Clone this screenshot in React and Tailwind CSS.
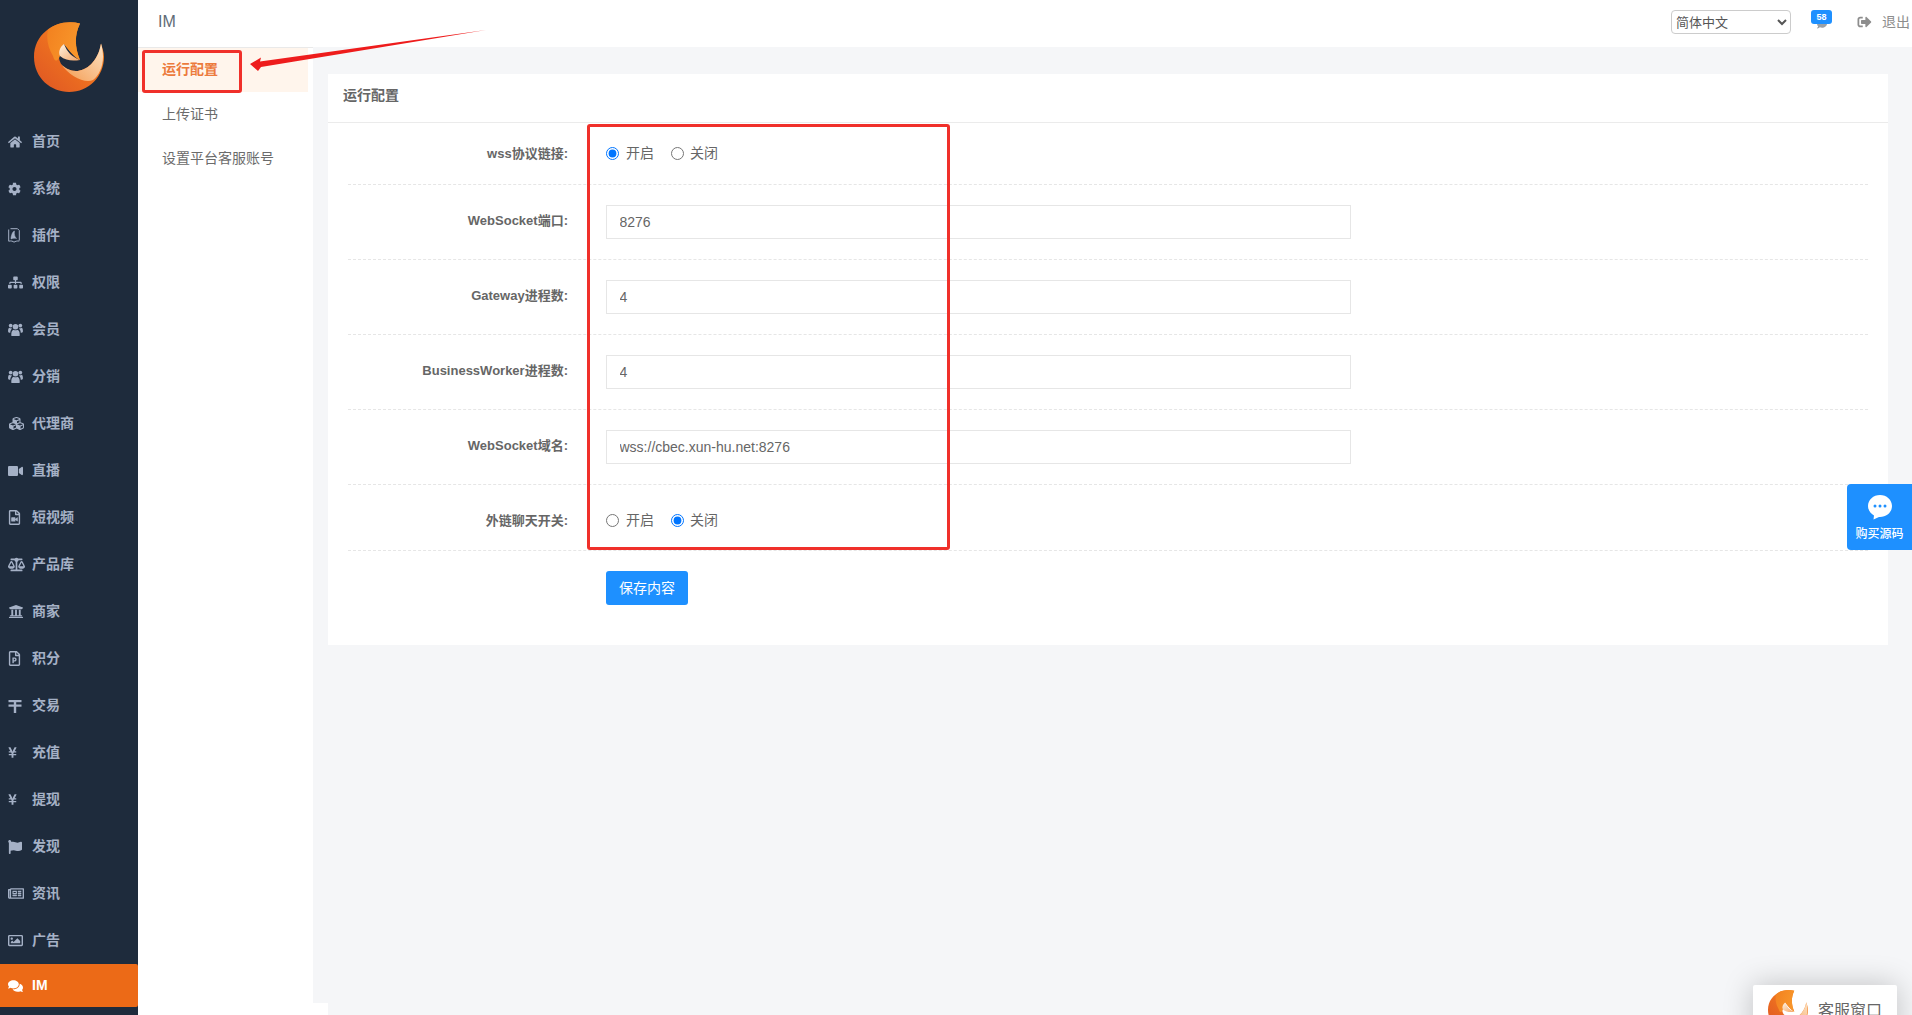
import React from "react";
import {
  FaHome, FaCog, FaSitemap, FaCubes, FaVideo, FaRegFileVideo,
  FaBalanceScale, FaUniversity, FaRegFilePowerpoint, FaYenSign, FaFlag, FaRegNewspaper,
  FaRegImage, FaComments, FaSignOutAlt, FaComment,
} from "react-icons/fa";

function TradeIcon({ className }) {
  return (
    <svg viewBox="0 0 14 14" className={className} fill="currentColor">
      <rect x="0.5" y="1" width="13" height="2.2" />
      <rect x="0.5" y="5.5" width="13" height="2.2" />
      <rect x="5.8" y="1" width="2.4" height="13" />
    </svg>
  );
}

function UsersIcon({ className }) {
  return (
    <svg viewBox="0 0 16 14" className={className} fill="currentColor">
      <circle cx="8" cy="4" r="3" />
      <path d="M3.6,14C3,9.5 4.5,7.6 6,7.2C7,8 9,8 10,7.2C11.5,7.6 13,9.5 12.4,14C11,14.3 5,14.3 3.6,14Z" />
      <circle cx="2.8" cy="2.8" r="2" />
      <circle cx="13.2" cy="2.8" r="2" />
      <path d="M0,9C0,6.5 .6,5.2 1.4,5.2C2.2,5.8 3.2,5.9 4,5.6C4,6.4 3.6,6.8 3.2,7.2C2.6,8 2.4,9.4 2.4,10.6C1,10.6 0,10.2 0,9Z" />
      <path d="M16,9C16,6.5 15.4,5.2 14.6,5.2C13.8,5.8 12.8,5.9 12,5.6C12,6.4 12.4,6.8 12.8,7.2C13.4,8 13.6,9.4 13.6,10.6C15,10.6 16,10.2 16,9Z" />
    </svg>
  );
}

function PluginIcon({ className }) {
  return (
    <svg viewBox="0 0 12 15" className={className} fill="none" stroke="currentColor">
      <path d="M2.5,.7H9.5L11.3,2.5V12.5" strokeWidth="1" />
      <path d="M.7,1.5V13.2C3,12.6 5,13.2 6,14.2C7.2,13.3 9.2,12.8 11.3,13" strokeWidth="1" />
      <path d="M3,9.5C4,5 5,3.5 6.5,3C6,6 6.5,8.5 8.5,10.5C6.8,10 4.5,10 3,11Z" fill="currentColor" strokeWidth=".5" />
    </svg>
  );
}

const items = [
  ["首页", FaHome, "w-[14px] h-[14px]"], ["系统", FaCog, "w-[13px] h-[14px]"], ["插件", PluginIcon, "w-[12px] h-[15px]"],
  ["权限", FaSitemap, "w-[15px] h-[15px]"], ["会员", UsersIcon, "w-[15px] h-[13px]"], ["分销", UsersIcon, "w-[15px] h-[13px]"],
  ["代理商", FaCubes, "w-[17px] h-[15px]"], ["直播", FaVideo, "w-[15px] h-[14px]"], ["短视频", FaRegFileVideo, "w-[13px] h-[15px]"],
  ["产品库", FaBalanceScale, "w-[17px] h-[15px]"], ["商家", FaUniversity, "w-[16px] h-[15px]"], ["积分", FaRegFilePowerpoint, "w-[13px] h-[15px]"],
  ["交易", TradeIcon, "w-[14px] h-[14px]"], ["充值", FaYenSign, "w-[9px] h-[13px]"], ["提现", FaYenSign, "w-[9px] h-[13px]"],
  ["发现", FaFlag, "w-[14px] h-[14px]"], ["资讯", FaRegNewspaper, "w-[16px] h-[15px]"], ["广告", FaRegImage, "w-[15px] h-[15px]"],
];

function Logo({ className }) {
  return (
    <svg viewBox="33 22 70 70" className={className}>
      <defs>
        <linearGradient id="lgA" x1="0" y1="1" x2="1" y2="0">
          <stop offset="0" stopColor="#de5424" />
          <stop offset="0.6" stopColor="#f0761f" />
          <stop offset="1" stopColor="#f78d27" />
        </linearGradient>
        <linearGradient id="lgB" x1="0" y1="0" x2="1" y2="0.4">
          <stop offset="0" stopColor="#f2801f" />
          <stop offset="1" stopColor="#f8962a" />
        </linearGradient>
        <linearGradient id="lgC" x1="0" y1="1" x2="1" y2="0">
          <stop offset="0" stopColor="#f39a4f" />
          <stop offset="1" stopColor="#fde4c6" />
        </linearGradient>
        <linearGradient id="lgD" x1="0" y1="0" x2="1" y2="1">
          <stop offset="0" stopColor="#fff3e2" />
          <stop offset="1" stopColor="#f3a566" />
        </linearGradient>
      </defs>
      <path d="M79,23.5C60,18 33,30 33,57C33,78 50,92 68,92C88,92 103,76 103,57C103,52 101,47 100,43.5C97,62 85,71 75,71C66,71 59,66 58,58L63,44C68,50 72,56 79,60C74,48 73,36 79,23.5Z" fill="url(#lgA)" />
      <path d="M79,23.5C66,20 52,24 47,30C45,38 47,48 52,56C53,60 55,63 58,58L63,44C68,50 72,56 79,60C74,48 73,36 79,23.5Z" fill="url(#lgB)" />
      <path d="M60,64C68,76 84,84 92,80C100,74 105,60 100,43.5C97,62 85,71 75,71C69,71 64,68 60,64Z" fill="url(#lgC)" />
      <path d="M63,44C59,47 57,52 59,56C65,61 72,61 79,60C71,57 66,52 63,44Z" fill="url(#lgD)" />
    </svg>
  );
}

function Field({ label, value }) {
  return (
    <div className="flex h-[75px] items-center border-b border-dashed border-[#e6e6e6]">
      <label className="w-[220px] text-right text-[13px] font-bold text-[#666] -mt-[3px]">{label}:</label>
      <input
        readOnly
        defaultValue={value}
        className="ml-[38px] h-[34px] w-[745px] border border-[#e6e6e6] bg-white px-[12.5px] text-[14px] text-[#666] outline-none"
      />
    </div>
  );
}

function RadioRow({ label, name, on, className }) {
  return (
    <div className={`flex items-center border-b border-dashed border-[#e6e6e6] ${className}`}>
      <label className="w-[220px] text-right text-[13px] font-bold text-[#666]">{label}:</label>
      <div className="ml-[38px] flex items-center text-[14px] text-[#666]">
        <input type="radio" name={name} defaultChecked={on === 0} className="m-0 h-[13px] w-[13px]" />
        <span className="ml-[7px] w-[28px]">开启</span>
        <input type="radio" name={name} defaultChecked={on === 1} className="m-0 ml-[17px] h-[13px] w-[13px]" />
        <span className="ml-[6px] w-[28px]">关闭</span>
      </div>
    </div>
  );
}

export default function App() {
  return (
    <div className="relative flex h-[1015px] w-[1912px] overflow-hidden bg-white font-['Liberation_Sans','Noto_Sans_CJK_SC',sans-serif]">
      {/* primary sidebar */}
      <aside className="flex w-[138px] shrink-0 flex-col bg-[#1e2b3c]">
        <div className="flex h-[117px] shrink-0 justify-center">
          <Logo className="mt-[22px] h-[70px] w-[70px]" />
        </div>
        <nav className="flex flex-col pt-[1px]">
          {items.map(([t, Icon, w]) => (
            <div key={t} className="flex h-[47px] items-center text-[14px] font-bold text-[#a5b1c6]">
              <span className="flex w-[32px] shrink-0 justify-start pl-[8px]">
                <Icon className={w} />
              </span>
              {t}
            </div>
          ))}
          <div className="flex h-[43px] items-center rounded-r-[2px] bg-[#ec6a17] text-[14px] font-bold text-white">
            <span className="flex w-[32px] shrink-0 pl-[8px]">
              <FaComments className="h-[14px] w-[15px]" />
            </span>
            IM
          </div>
        </nav>
      </aside>

      <div className="flex min-w-0 flex-1 flex-col">
        {/* top bar */}
        <header className="flex h-[47px] shrink-0 items-center bg-white pb-[3px]">
          <span className="ml-[20px] text-[16px] text-[#5f6b76]">IM</span>
          <select
            defaultValue="zh"
            className="ml-auto h-[24px] w-[120px] rounded-[4px] border border-[#ccc] bg-white text-[13px] text-[#555]"
          >
            <option value="zh">简体中文</option>
          </select>
          <span className="relative ml-[20px] flex h-[24px] w-[21px] flex-col items-center">
            <FaComment className="absolute left-[6px] top-[9px] h-[10px] w-[10px] text-[#9aa0a6]" />
            <span className="relative flex h-[14px] w-[21px] items-center justify-center rounded-[3px] bg-[#1e90ff] text-[9px] leading-none font-bold text-white">58</span>
          </span>
          <FaSignOutAlt className="ml-[25px] h-[14px] w-[15px] text-[#8d8d8d]" />
          <span className="ml-[10px] mr-[2px] text-[14px] text-[#8d8d8d]">退出</span>
        </header>

        <div className="flex min-h-0 flex-1">
          {/* secondary nav */}
          <div className="w-[175px] shrink-0 border-t border-[#e9e9e9] bg-white text-[14px] text-[#6b6b6b]">
            <div className="flex h-[44px] w-[170px] items-center bg-[#fff5ec] pb-[2px] pl-[24px] font-bold text-[#ec7a3c]">运行配置</div>
            <div className="flex h-[44px] items-center pl-[24px]">上传证书</div>
            <div className="flex h-[44px] items-center pl-[24px]">设置平台客服账号</div>
          </div>

          {/* content */}
          <main className="flex min-w-0 flex-1 flex-col bg-[#f5f6f8]">
            <section className="ml-[15px] mr-[24px] mt-[27px] bg-white pb-[40px]">
              <h2 className="flex h-[49px] items-center border-b border-[#ebebeb] pb-[6px] pl-[15px] text-[14px] font-bold text-[#666]">运行配置</h2>
              <div className="px-[20px]">
                <RadioRow label="wss协议链接" name="wss" on={0} className="h-[62px]" />
                <Field label="WebSocket端口" value="8276" />
                <Field label="Gateway进程数" value="4" />
                <Field label="BusinessWorker进程数" value="4" />
                <Field label="WebSocket域名" value="wss://cbec.xun-hu.net:8276" />
                <RadioRow label="外链聊天开关" name="ext" on={1} className="h-[66px] pt-[6px]" />
                <button className="ml-[258px] mt-[20px] h-[34px] w-[82px] rounded-[3px] bg-[#1e90ff] text-[14px] text-white">保存内容</button>
              </div>
            </section>
            <div className="mt-auto h-[12px] w-[15px] bg-white" />
          </main>
        </div>
      </div>

      {/* annotations drawn over the page */}
      <div className="absolute left-[142px] top-[50px] h-[43px] w-[100px] rounded-[3px] border-[3px] border-[#f0302a]" />
      <div className="absolute left-[587px] top-[124px] h-[426px] w-[363px] rounded-[3px] border-[3px] border-[#f0302a]" />
      <svg className="absolute left-0 top-0" width="520" height="90" viewBox="0 0 520 90">
        <path d="M250,64L261,57.5L260,61.5L486,30L261,67L258,71Z" fill="#ee1c1c" />
      </svg>

      {/* floating buy-source button */}
      <div className="absolute left-[1847px] top-[484px] flex h-[66px] w-[65px] flex-col items-center rounded-l-[4px] bg-[#1e90ff] text-white">
        <svg viewBox="0 0 26 26" className="mt-[10px] h-[26px] w-[26px]">
          <path d="M13,1C6.4,1 1,5.9 1,12C1,17 4.5,20 7,21.5L6.5,25.5L12,23C19,23.5 25,18.5 25,12C25,5.9 19.6,1 13,1Z" fill="#fff" />
          <circle cx="8" cy="12" r="1.5" fill="#1e90ff" />
          <circle cx="13" cy="12" r="1.5" fill="#1e90ff" />
          <circle cx="18" cy="12" r="1.5" fill="#1e90ff" />
        </svg>
        <span className="mt-[6px] text-[12px] leading-[16px] font-medium">购买源码</span>
      </div>

      {/* floating service window, cut by the page bottom */}
      <div className="absolute left-[1753px] top-[985px] flex h-[60px] w-[144px] items-start rounded-[2px] bg-white shadow-[0_0_30px_rgba(0,0,0,0.22)]">
        <Logo className="ml-[15px] mt-[5px] h-[40px] w-[40px]" />
        <span className="ml-[10px] mt-[16px] text-[16px] leading-[20px] text-[#666]">客服窗口</span>
      </div>
    </div>
  );
}
